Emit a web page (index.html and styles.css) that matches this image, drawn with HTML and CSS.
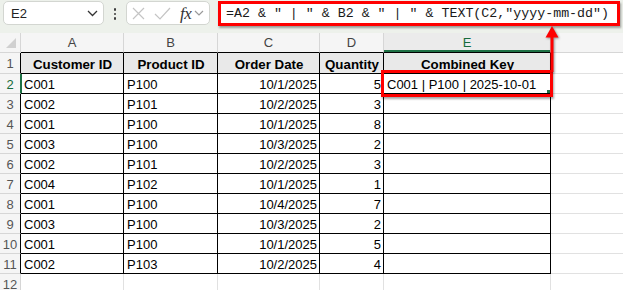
FILE: index.html
```html
<!DOCTYPE html>
<html>
<head>
<meta charset="utf-8">
<link rel="stylesheet" href="styles.css">
</head>
<body>
<div class="toolbar">
  <div class="namebox">
    <span class="nbtext">E2</span>
    <svg class="chev" width="11" height="7" viewBox="0 0 11 7"><path d="M1 1 L5.5 5.5 L10 1" fill="none" stroke="#333" stroke-width="1.3"/></svg>
  </div>
  <div class="dots"><i></i><i></i><i></i></div>
  <div class="fxbox">
    <svg class="ico" width="13" height="13" viewBox="0 0 13 13"><path d="M1 1 L12 12 M12 1 L1 12" stroke="#c4c4c4" stroke-width="1.2" fill="none"/></svg>
    <svg class="ico chk" width="17" height="13" viewBox="0 0 17 13"><path d="M1 7 L6 12 L16 1" stroke="#c4c4c4" stroke-width="1.2" fill="none"/></svg>
    <span class="fx">fx</span>
    <svg class="fxchev" width="10" height="6" viewBox="0 0 10 6"><path d="M1 1 L5 5 L9 1" fill="none" stroke="#9a9a9a" stroke-width="1.2"/></svg>
  </div>
  <div class="formula">=A2 &amp; " | " &amp; B2 &amp; " | " &amp; TEXT(C2,"yyyy-mm-dd")</div>
</div>

<div class="sheet">
  <div class="c corner"></div>
  <div class="c ch t">A</div>
  <div class="c ch t">B</div>
  <div class="c ch t">C</div>
  <div class="c ch t">D</div>
  <div class="c ch t sel">E</div>
  <div class="c ch f"></div>

  <div class="c rh t">1</div>
  <div class="c d hd">Customer ID</div>
  <div class="c d hd">Product ID</div>
  <div class="c d hd">Order Date</div>
  <div class="c d hd">Quantity</div>
  <div class="c d hd">Combined Key</div>
  <div class="c f"></div>

  <div class="c rh t sel">2</div>
  <div class="c d a2">C001</div>
  <div class="c d">P100</div>
  <div class="c d r">10/1/2025</div>
  <div class="c d r">5</div>
  <div class="c d key">C001 | P100 | 2025-10-01</div>
  <div class="c f"></div>

  <div class="c rh t">3</div>
  <div class="c d">C002</div>
  <div class="c d">P101</div>
  <div class="c d r">10/2/2025</div>
  <div class="c d r">3</div>
  <div class="c d"></div>
  <div class="c f"></div>

  <div class="c rh t">4</div>
  <div class="c d">C001</div>
  <div class="c d">P100</div>
  <div class="c d r">10/1/2025</div>
  <div class="c d r">8</div>
  <div class="c d"></div>
  <div class="c f"></div>

  <div class="c rh t">5</div>
  <div class="c d">C003</div>
  <div class="c d">P100</div>
  <div class="c d r">10/3/2025</div>
  <div class="c d r">2</div>
  <div class="c d"></div>
  <div class="c f"></div>

  <div class="c rh t">6</div>
  <div class="c d">C002</div>
  <div class="c d">P101</div>
  <div class="c d r">10/2/2025</div>
  <div class="c d r">3</div>
  <div class="c d"></div>
  <div class="c f"></div>

  <div class="c rh t">7</div>
  <div class="c d">C004</div>
  <div class="c d">P102</div>
  <div class="c d r">10/1/2025</div>
  <div class="c d r">1</div>
  <div class="c d"></div>
  <div class="c f"></div>

  <div class="c rh t">8</div>
  <div class="c d">C001</div>
  <div class="c d">P100</div>
  <div class="c d r">10/4/2025</div>
  <div class="c d r">7</div>
  <div class="c d"></div>
  <div class="c f"></div>

  <div class="c rh t">9</div>
  <div class="c d">C003</div>
  <div class="c d">P100</div>
  <div class="c d r">10/3/2025</div>
  <div class="c d r">2</div>
  <div class="c d"></div>
  <div class="c f"></div>

  <div class="c rh t">10</div>
  <div class="c d">C001</div>
  <div class="c d">P100</div>
  <div class="c d r">10/1/2025</div>
  <div class="c d r">5</div>
  <div class="c d"></div>
  <div class="c f"></div>

  <div class="c rh t">11</div>
  <div class="c d">C002</div>
  <div class="c d">P103</div>
  <div class="c d r">10/2/2025</div>
  <div class="c d r">4</div>
  <div class="c d"></div>
  <div class="c f"></div>

  <div class="c rh">12</div>
  <div class="c"></div>
  <div class="c"></div>
  <div class="c"></div>
  <div class="c"></div>
  <div class="c"></div>
  <div class="c f"></div>
</div>

<div class="hl"><i class="handle"></i></div>
<svg class="arrow" width="24" height="50" viewBox="0 0 24 50">
  <path d="M12 1 L5.5 12.5 L18.5 12.5 Z" fill="#ff0000"/>
  <rect x="10.5" y="11" width="3" height="36" fill="#ff0000"/>
</svg>
</body>
</html>
```

FILE: styles.css
```css
* { box-sizing: border-box; }
html, body { margin: 0; padding: 0; }
body {
  width: 623px;
  height: 290px;
  overflow: hidden;
  background: #ffffff;
  font-family: "Liberation Sans", Arial, sans-serif;
  position: relative;
}

/* ---------- formula toolbar ---------- */
.toolbar {
  height: 33px;
  background: #edf1eb;
  display: flex;
  align-items: flex-start;
  padding: 1px 0 0 3px;
}
.namebox {
  width: 101px;
  height: 24px;
  background: #fff;
  border: 1px solid #d3d6d1;
  border-radius: 5px;
  display: flex;
  align-items: center;
  padding: 0 5px 0 7px;
}
.nbtext { font-size: 13px; color: #222; }
.chev { margin-left: auto; }
.dots {
  width: 6px;
  margin-left: 8px;
  display: flex;
  flex-direction: column;
  align-items: center;
  gap: 2px;
  padding-top: 7px;
}
.dots i {
  display: block;
  width: 2.5px;
  height: 2.5px;
  border-radius: 50%;
  background: #3c3c3c;
}
.fxbox {
  width: 84px;
  height: 24px;
  margin-left: 8px;
  background: #fff;
  border: 1px solid #d3d6d1;
  border-radius: 5px;
  display: flex;
  align-items: center;
  padding-left: 5px;
}
.ico { display: block; }
.chk { margin-left: 9px; }
.fx {
  font-family: "Liberation Serif", "Times New Roman", serif;
  font-style: italic;
  font-size: 17px;
  color: #333;
  margin-left: 9px;
  line-height: 1;
  letter-spacing: -0.5px;
}
.fxchev { margin-left: 3px; }
.formula {
  width: 402px;
  height: 25px;
  margin-left: 8px;
  background: #fff;
  border: 3px solid #ff0000;
  box-shadow: 1px 2px 2px rgba(0,0,0,0.35);
  font-family: "Liberation Mono", "DejaVu Sans Mono", monospace;
  font-size: 13.3px;
  line-height: 19px;
  color: #1a1a1a;
  padding-left: 5px;
  white-space: pre;
}

/* ---------- sheet grid ---------- */
.sheet {
  display: grid;
  grid-template-columns: 21px 103px 94px 102px 64px 167px 1fr;
  grid-template-rows: 20px 21px repeat(11, 20px);
}
.c {
  border-right: 1px solid #e1e1e1;
  border-bottom: 1px solid #e1e1e1;
  font-size: 13px;
  line-height: 19px;
  padding: 1px 2px 0 3px;
  white-space: nowrap;
  overflow: hidden;
  color: #000;
}
.f { border-right: none; }

.corner {
  background: #f5f5f5;
  border-right-color: #d6d6d6;
  border-bottom-color: #d6d6d6;
  position: relative;
}
.corner::after {
  content: "";
  position: absolute;
  right: 4px;
  bottom: 4px;
  width: 0;
  height: 0;
  border-left: 10px solid transparent;
  border-bottom: 10px solid #d0d0d0;
}

.ch {
  background: #f5f5f5;
  color: #444;
  text-align: center;
  border-right-color: #d6d6d6;
  border-bottom-color: #d6d6d6;
  padding: 0;
  line-height: 19px;
}
.ch.t { border-bottom-color: #000; }
.ch.sel {
  color: #166b3c;
  background: #ebebeb;
  box-shadow: inset 0 -2px 0 #1e7145;
}

.rh {
  background: #f5f5f5;
  color: #555;
  text-align: center;
  padding: 1px 0 0 0;
  border-right-color: #d6d6d6;
  border-bottom-color: #d6d6d6;
}
.rh.t { border-right-color: #000; }
.rh.sel { color: #166b3c; border-right-color: #1e7145; }
.a2 { box-shadow: inset 1px 0 0 #1e7145; }

.d {
  border-right-color: #000;
  border-bottom-color: #000;
}
.hd {
  background: #e9e9e9;
  font-weight: bold;
  font-size: 13.3px;
  text-align: center;
  line-height: 19px;
  padding-top: 2px;
}
.r { text-align: right; }
.key { padding-left: 3px; }

/* ---------- annotations ---------- */
.hl {
  position: absolute;
  left: 381px;
  top: 70px;
  width: 172px;
  height: 27px;
  border: 3px solid #ff0000;
  box-shadow: 1px 2px 2px rgba(0,0,0,0.35);
}
.handle {
  position: absolute;
  right: 0;
  bottom: 1px;
  width: 3px;
  height: 3px;
  background: #1e7145;
}
.arrow {
  position: absolute;
  left: 540px;
  top: 25px;
  filter: drop-shadow(1px 1px 1px rgba(0,0,0,0.4));
}
```
